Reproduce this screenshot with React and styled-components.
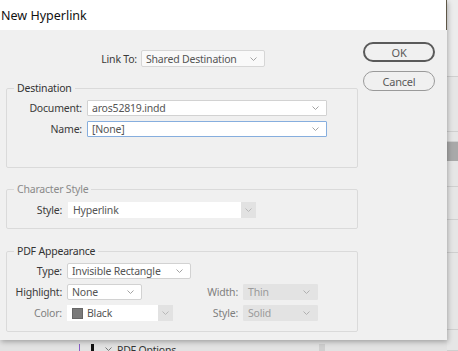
import styled, { createGlobalStyle } from "styled-components";

const GlobalStyle = createGlobalStyle`
  html, body {
    margin: 0;
    padding: 0;
    overflow: hidden;
    background: #e6e6e6;
  }
  body {
    font-family: "Noto Sans", "Open Sans", sans-serif;
    font-size: 10.5px;
    letter-spacing: -0.2px;
    color: #3a3a3a;
  }
`;

const Chevron = ({ color = "#a3a3a3" }) => (
  <svg width="7" height="4" viewBox="0 0 7 4">
    <polyline points="0.5,0.5 3.5,3.5 6.5,0.5" fill="none" stroke={color} strokeWidth="1" />
  </svg>
);

function Select({ value, width, variant, swatch }) {
  if (variant === "split") {
    return (
      <SplitBox width={width}>
        <SplitField>
          {swatch && <Swatch />}
          {value}
        </SplitField>
        <SplitArrow>
          <Chevron color="#b8b8b8" />
        </SplitArrow>
      </SplitBox>
    );
  }
  return (
    <SelectBox width={width} variant={variant}>
      <span>{value}</span>
      <Chevron color={variant === "disabled" ? "#b0b0b0" : "#a3a3a3"} />
    </SelectBox>
  );
}

export default function App() {
  return (
    <>
      <GlobalStyle />
      <Page>
        <Dialog>
          <TitleBar>New Hyperlink</TitleBar>
          <Body>
            <Main>
              <LinkRow>
                <Label width={131}>Link To:</Label>
                <Select value="Shared Destination" width={124} variant="light" />
              </LinkRow>

              <Group top={14} pb={30}>
                <Legend>Destination</Legend>
                <Rows>
                  <Row>
                    <Label width={75}>Document:</Label>
                    <Select value="aros52819.indd" width={240} />
                  </Row>
                  <Row>
                    <Label width={75}>Name:</Label>
                    <Select value="[None]" width={240} variant="focus" />
                  </Row>
                </Rows>
              </Group>

              <Group top={14} pb={10} pt={6}>
                <Legend muted>Character Style</Legend>
                <Rows>
                  <Row gap={6}>
                    <Label width={55}>Style:</Label>
                    <Select value="Hyperlink" width={188} variant="split" />
                  </Row>
                </Rows>
              </Group>

              <Group top={15} pb={10}>
                <Legend>PDF Appearance</Legend>
                <Rows>
                  <Row>
                    <Label width={55}>Type:</Label>
                    <Select value="Invisible Rectangle" width={124} variant="round" />
                  </Row>
                  <Row>
                    <Label width={55}>Highlight:</Label>
                    <Select value="None" width={75} variant="round" />
                    <Label width={91} muted>
                      Width:
                    </Label>
                    <Select value="Thin" width={75} variant="disabled" />
                  </Row>
                  <Row>
                    <Label width={55} muted>
                      Color:
                    </Label>
                    <Select value="Black" width={106} variant="split" swatch />
                    <Label width={60} muted>
                      Style:
                    </Label>
                    <Select value="Solid" width={75} variant="disabled" />
                  </Row>
                </Rows>
              </Group>
            </Main>

            <Buttons>
              <Button primary>OK</Button>
              <Button>Cancel</Button>
            </Buttons>
          </Body>
        </Dialog>

        <SideStrip>
          <Band h={77} />
          <Band h={55} />
          <Band h={10} />
          <Band h={19} dark />
          <Band h={26} />
          <Band h={33} />
          <Band h={33} />
          <Band h={77} />
          <Band h={21} />
        </SideStrip>

        <BottomStrip>
          <PurpleRule />
          <BlackBar />
          <Chevron color="#777" />
          <BottomText>PDF Options</BottomText>
          <Spacer />
          <GreyBar />
        </BottomStrip>
      </Page>
    </>
  );
}

const Page = styled.div`
  width: 458px;
  height: 351px;
  display: grid;
  grid-template-columns: 447px 11px;
  grid-template-rows: 340px 11px;
  overflow: hidden;
`;

const Dialog = styled.div`
  grid-column: 1;
  grid-row: 1;
  display: flex;
  flex-direction: column;
  position: relative;
  z-index: 1;
  box-shadow: 1px 2px 5px rgba(0, 0, 0, 0.28);
`;

const TitleBar = styled.div`
  height: 30px;
  flex: none;
  background: #fff;
  border-right: 1px solid #5e5747;
  display: flex;
  align-items: center;
  padding-left: 1px;
  font-size: 12.5px;
  letter-spacing: 0;
  color: #111;
`;

const Body = styled.div`
  flex: 1;
  background: #f0f0f0;
  display: flex;
  padding-left: 6px;
`;

const Main = styled.div`
  width: 352px;
  display: flex;
  flex-direction: column;
  padding-top: 20px;
`;

const LinkRow = styled.div`
  display: flex;
  align-items: center;
  gap: 4px;
  height: 17px;
`;

const Group = styled.fieldset`
  margin: ${({ top }) => top}px 0 0 0;
  padding: ${({ pt }) => pt ?? 5}px 0 ${({ pb }) => pb}px 0;
  border: 1px solid #dadada;
  border-radius: 2px;
  min-width: 0;
`;

const Legend = styled.legend`
  margin-left: 7px;
  padding: 0 3px;
  line-height: 14px;
  color: ${({ muted }) => (muted ? "#8a8a8a" : "#333")};
`;

const Rows = styled.div`
  display: flex;
  flex-direction: column;
  gap: 5px;
`;

const Row = styled.div`
  display: flex;
  align-items: center;
  gap: ${({ gap }) => gap ?? 5}px;
  height: 16px;
`;

const Label = styled.span`
  width: ${({ width }) => width}px;
  flex: none;
  text-align: right;
  white-space: nowrap;
  color: ${({ muted }) => (muted ? "#7f7f7f" : "#3a3a3a")};
`;

const SelectBox = styled.div`
  width: ${({ width }) => width}px;
  height: ${({ variant }) => (variant === "light" ? 17 : 16)}px;
  box-sizing: border-box;
  flex: none;
  display: flex;
  align-items: center;
  justify-content: space-between;
  padding: 0 7px 0 4px;
  white-space: nowrap;
  color: ${({ variant }) => (variant === "disabled" ? "#9a9a9a" : "#555")};
  background: ${({ variant }) =>
    variant === "disabled" ? "#e3e3e3" : variant === "light" ? "#f9f9f9" : "#fff"};
  border: 1px solid
    ${({ variant }) =>
      variant === "focus"
        ? "#86aede"
        : variant === "disabled"
        ? "#e3e3e3"
        : variant === "light"
        ? "#d6d6d6"
        : "#d2d2d2"};
  border-radius: ${({ variant }) => (variant === "round" || variant === "light" ? 2 : 1)}px;
`;

const SplitBox = styled.div`
  width: ${({ width }) => width}px;
  height: 16px;
  flex: none;
  display: flex;
`;

const SplitField = styled.div`
  flex: 1;
  background: #fff;
  display: flex;
  align-items: center;
  gap: 4px;
  padding-left: 5px;
  color: #555;
`;

const SplitArrow = styled.div`
  width: 15px;
  background: #e2e2e2;
  display: flex;
  align-items: center;
  justify-content: center;
`;

const Swatch = styled.span`
  width: 9px;
  height: 9px;
  background: #7a7a7a;
  border: 1px solid #666;
`;

const Buttons = styled.div`
  display: flex;
  flex-direction: column;
  gap: 9px;
  padding: 12px 0 0 5px;
`;

const Button = styled.button`
  width: 72px;
  height: 20px;
  box-sizing: border-box;
  background: #f0f0f0;
  border: ${({ primary }) => (primary ? "2px solid #5a5a5a" : "1px solid #9a9a9a")};
  border-radius: 10px;
  font-family: inherit;
  font-size: 11px;
  letter-spacing: inherit;
  color: #5a5a5a;
  padding: 0;
`;

const SideStrip = styled.div`
  grid-column: 2;
  grid-row: 1 / span 2;
  display: flex;
  flex-direction: column;
  background: #e4e4e4;
`;

const Band = styled.div`
  height: ${({ h }) => h}px;
  flex: none;
  box-sizing: border-box;
  background: ${({ dark }) => (dark ? "#a9a9a9" : "#e6e6e6")};
  border-bottom: 1px solid ${({ dark }) => (dark ? "#a9a9a9" : "#cfcfcf")};
  &:first-child {
    background: #ececec;
  }
`;

const BottomStrip = styled.div`
  grid-column: 1;
  grid-row: 2;
  background: #e2e2e2;
  display: flex;
  align-items: flex-start;
  padding-top: 4px;
  padding-left: 79px;
  overflow: hidden;
  & > svg {
    margin: 3px 5px 0 11px;
  }
`;

const PurpleRule = styled.div`
  width: 1px;
  height: 10px;
  background: #8a5fc8;
`;

const BlackBar = styled.div`
  width: 3px;
  height: 10px;
  margin-left: 11px;
  background: #111;
`;

const BottomText = styled.span`
  font-size: 10.5px;
  line-height: 12px;
  color: #333;
`;

const Spacer = styled.div`
  flex: 1;
`;

const GreyBar = styled.div`
  width: 6px;
  height: 10px;
  margin-right: 122px;
  background: #cfcfcf;
`;
